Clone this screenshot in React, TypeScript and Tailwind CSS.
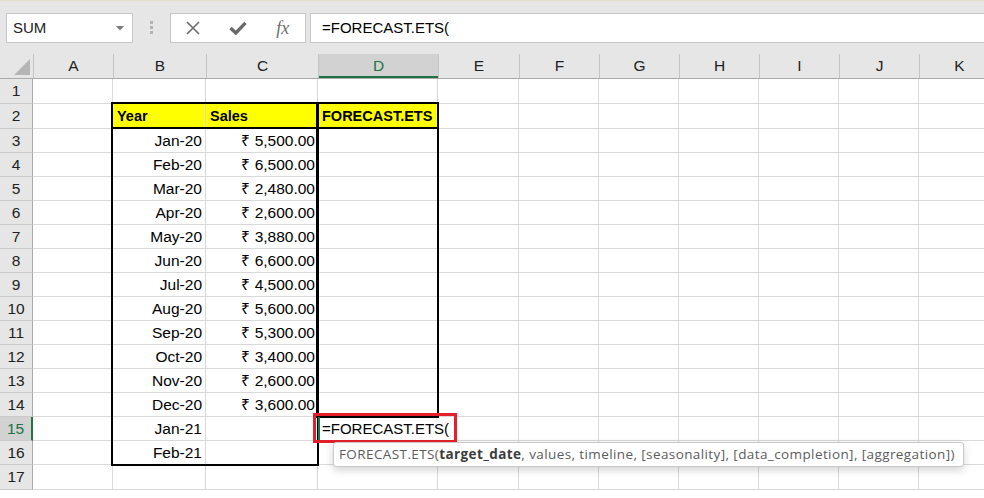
import React from "react";

type Col = { key: string; w: string };

const COLS: Col[] = [
  { key: "A", w: "w-[80px]" },
  { key: "B", w: "w-[93px]" },
  { key: "C", w: "w-[112px]" },
  { key: "D", w: "w-[120px]" },
  { key: "E", w: "w-[81px]" },
  { key: "F", w: "w-[80px]" },
  { key: "G", w: "w-[80px]" },
  { key: "H", w: "w-[80px]" },
  { key: "I", w: "w-[80px]" },
  { key: "J", w: "w-[80px]" },
  { key: "K", w: "w-[80px]" },
];

const SALES: [string, string][] = [
  ["Jan-20", "₹ 5,500.00"],
  ["Feb-20", "₹ 6,500.00"],
  ["Mar-20", "₹ 2,480.00"],
  ["Apr-20", "₹ 2,600.00"],
  ["May-20", "₹ 3,880.00"],
  ["Jun-20", "₹ 6,600.00"],
  ["Jul-20", "₹ 4,500.00"],
  ["Aug-20", "₹ 5,600.00"],
  ["Sep-20", "₹ 5,300.00"],
  ["Oct-20", "₹ 3,400.00"],
  ["Nov-20", "₹ 2,600.00"],
  ["Dec-20", "₹ 3,600.00"],
  ["Jan-21", ""],
  ["Feb-21", ""],
];

// rows 1..17 with their heights
const ROWS = Array.from({ length: 17 }, (_, i) => i + 1);
const rowHeight = (r: number) => (r <= 2 || r === 17 ? "h-[25px]" : "h-[24px]");

function cellContent(r: number, key: string) {
  if (r === 2) {
    if (key === "B") return { text: "Year", cls: "bg-[#ffff00] font-bold text-[14.5px] justify-start" };
    if (key === "C") return { text: "Sales", cls: "bg-[#ffff00] font-bold text-[14.5px] justify-start" };
    if (key === "D") return { text: "FORECAST.ETS", cls: "bg-[#ffff00] font-bold text-[14.5px] justify-start" };
  }
  if (r >= 3 && r <= 16) {
    const [m, s] = SALES[r - 3];
    if (key === "B") return { text: m, cls: "justify-end pr-[3px] text-[15.5px]" };
    if (key === "C" && s) return { text: s, cls: "justify-end pr-[2px] text-[15.5px]" };
  }
  if (r === 15 && key === "D")
    return {
      text: "=FORECAST.ETS(",
      cls: "text-[15px] justify-start border-r-transparent overflow-visible whitespace-nowrap z-10 shadow-[inset_2px_0_0_#217346]",
    };
  return { text: "", cls: "text-[15px]" };
}

function Toolbar() {
  return (
    <div className="h-[54px] bg-[#e6e6e6] border-t border-[#e2e1c6] flex items-start pt-[12px]">
      {/* name box */}
      <div className="ml-[6px] w-[127px] shrink-0 h-[30px] bg-white border border-[#c6c6c6] flex items-center justify-between pl-[6px] pr-[8px]">
        <span className="text-[15px] text-[#222]">SUM</span>
        <svg width="8" height="5" viewBox="0 0 8 5">
          <polygon points="0,0 8,0 4,4.5" fill="#7a7a7a" />
        </svg>
      </div>
      {/* grip dots */}
      <div className="ml-[17px] mt-[8px] shrink-0 flex flex-col gap-[2px]">
        <div className="w-[3px] h-[3px] bg-[#b3b3b3]" />
        <div className="w-[3px] h-[3px] bg-[#b3b3b3]" />
        <div className="w-[3px] h-[3px] bg-[#b3b3b3]" />
      </div>
      {/* cancel / enter / fx */}
      <div className="ml-[17px] w-[136px] shrink-0 h-[30px] bg-white border border-[#c6c6c6] grid grid-cols-3 items-center">
        <div className="flex justify-center">
          <svg width="14" height="14" viewBox="0 0 14 14">
            <path d="M1 1 L13 13 M13 1 L1 13" stroke="#6e6e6e" strokeWidth="1.7" fill="none" />
          </svg>
        </div>
        <div className="flex justify-center">
          <svg width="18" height="14" viewBox="0 0 18 14">
            <path d="M1.5 7 L6.8 12 L16.5 1.8" stroke="#6a6a6a" strokeWidth="3.4" fill="none" strokeLinejoin="miter" />
          </svg>
        </div>
        <div className="flex justify-center">
          <span className="font-['Liberation_Serif',serif] italic text-[18px] text-[#6e6e6e] leading-none">fx</span>
        </div>
      </div>
      {/* formula input */}
      <div className="ml-[4px] w-[690px] shrink-0 h-[30px] bg-white border border-[#c6c6c6] flex items-center pl-[11px]">
        <span className="text-[15px] text-black">=FORECAST.ETS(</span>
      </div>
    </div>
  );
}

function HeaderRow() {
  return (
    <div className="flex h-[25px] bg-[#e6e6e6] border-b border-[#ababab]">
      <div className="w-[33px] shrink-0 h-full flex items-end justify-end pr-[3px] pb-[3px]">
        <svg width="16" height="16" viewBox="0 0 16 16">
          <polygon points="16,0 16,16 0,16" fill="#b5b5b5" />
        </svg>
      </div>
      {COLS.map((c) => (
        <div
          key={c.key}
          className={`${c.w} shrink-0 h-full border-l border-[#c4c4c4] flex items-center justify-center text-[15.5px] ${
            c.key === "D"
              ? "bg-[#d2d2d2] text-[#217346] shadow-[inset_0_-2px_0_#217346]"
              : "text-[#222]"
          }`}
        >
          {c.key}
        </div>
      ))}
    </div>
  );
}

function Sheet() {
  return (
    <div className="relative">
      {ROWS.map((r) => (
        <div key={r} className={`flex ${rowHeight(r)}`}>
          <div
            className={`w-[33px] shrink-0 h-full border-r border-b border-[#ababab] border-b-[#cacaca] flex items-center justify-center text-[15.5px] ${
              r === 15
                ? "bg-[#d2d2d2] text-[#217346] border-r-2 border-r-[#217346]"
                : "bg-[#e6e6e6] text-[#222]"
            }`}
          >
            {r}
          </div>
          {COLS.map((c) => {
            const { text, cls } = cellContent(r, c.key);
            return (
              <div
                key={c.key}
                className={`${c.w} shrink-0 h-full border-r border-b border-[#d9d9d9] flex items-center pl-[4px] text-black leading-none ${cls}`}
              >
                {text}
              </div>
            );
          })}
        </div>
      ))}

      {/* thick range borders */}
      <div className="absolute left-[111px] top-[23px] w-[208px] h-[364px] border-2 border-black pointer-events-none" />
      <div className="absolute left-[316px] top-[23px] w-[123px] h-[316px] border-2 border-black pointer-events-none" />
      <div className="absolute left-[111px] top-[48px] w-[328px] h-[2px] bg-black pointer-events-none" />

      {/* highlight around the formula cell */}
      <div className="absolute left-[313px] top-[334px] w-[144px] h-[30px] border-[3px] border-[#e6202a] pointer-events-none z-20" />

      {/* function tooltip */}
      <div className="absolute left-[333px] top-[363px] h-[25px] flex items-center pl-[5px] pr-[8px] bg-white border border-[#c9c9c9] rounded-[3px] shadow-[0_3px_8px_rgba(0,0,0,0.18)] whitespace-nowrap font-['Open_Sans',sans-serif] text-[13.5px] tracking-[0.4px] text-[#5c5c5c] z-20">
        FORECAST.ETS(<b className="font-bold text-[#3d3d3d]">target_date</b>, values, timeline, [seasonality], [data_completion], [aggregation])
      </div>
    </div>
  );
}

export default function App() {
  return (
    <div className="w-[984px] h-[498px] overflow-hidden bg-white font-['Liberation_Sans',Arial,sans-serif]">
      <Toolbar />
      <HeaderRow />
      <Sheet />
    </div>
  );
}
